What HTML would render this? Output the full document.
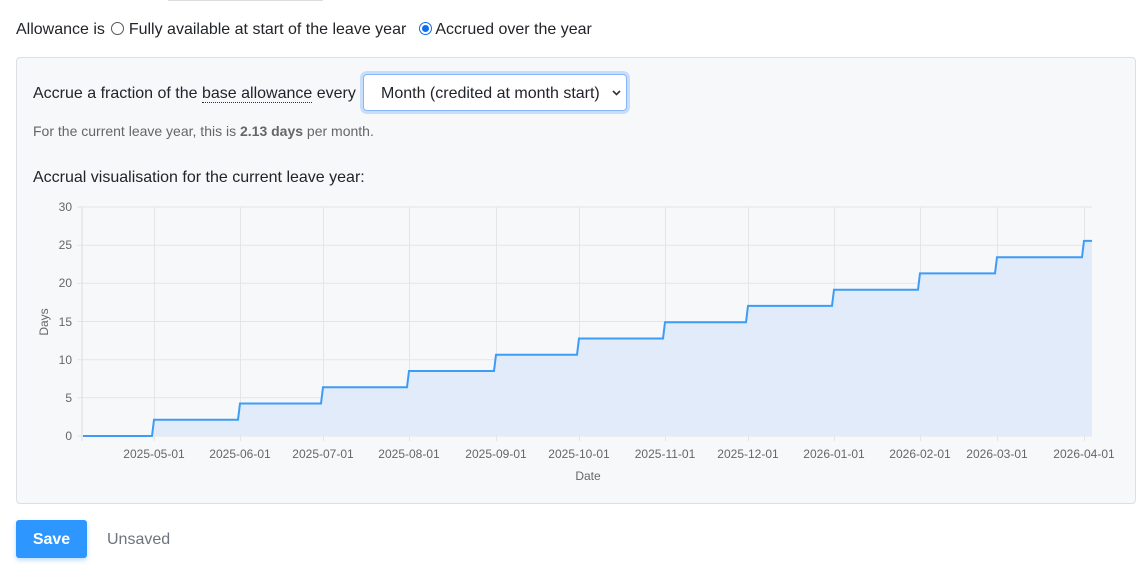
<!DOCTYPE html>
<html><head><style>
body{margin:0;width:1148px;height:569px;background:#fff;font-family:"Liberation Sans",sans-serif;position:relative;overflow:hidden;color:#212529}
.a{position:absolute;white-space:nowrap}
</style></head><body>
<div class="a" style="left:168px;top:-1px;width:155px;height:2px;background:#ddd"></div>
<div class="a" style="left:16px;top:21px;font-size:16px;">Allowance is
<span style="display:inline-block;width:11px;height:11px;border:1px solid #555;border-radius:50%;vertical-align:-1px;margin-left:2px"></span> Fully available at start of the leave year
<span style="display:inline-block;width:11px;height:11px;border:1px solid #0b6ef5;border-radius:50%;vertical-align:-1px;margin-left:8px;position:relative"><span style="position:absolute;left:2px;top:2px;width:7px;height:7px;border-radius:50%;background:#0b6ef5"></span></span> Accrued over the year</div>
<div class="a" style="left:16px;top:57px;width:1118px;height:445px;background:#f7f8fa;border:1px solid #dcdfe3;border-radius:4px"></div>
<div class="a" style="left:33px;top:85px;font-size:16px">Accrue a fraction of the <span style="border-bottom:1px dotted #333">base allowance</span> every</div>
<div class="a" style="left:363px;top:74px;width:264px;height:37px;background:#fff;border:1px solid #86b7fe;border-radius:4px;box-shadow:0 0 0 3px rgba(13,110,253,.2);box-sizing:border-box;font-size:16px;padding:10px 0 0 17px">Month (credited at month start)<svg style="position:absolute;right:5px;top:15px" width="9" height="6"><path d="M1 1 L4.5 4.5 L8 1" fill="none" stroke="#333" stroke-width="1.6"/></svg></div>
<div class="a" style="left:33px;top:123px;font-size:14px;color:#666">For the current leave year, this is <b>2.13 days</b> per month.</div>
<div class="a" style="left:33px;top:169px;font-size:16px">Accrual visualisation for the current leave year:</div>
<svg class="a" style="left:0;top:0" width="1148" height="569" font-family="Liberation Sans" font-size="12" fill="#666">
<g stroke="#e5e5e5" stroke-width="1">
<line x1="77" y1="207" x2="1092" y2="207"/><line x1="77" y1="245.2" x2="1092" y2="245.2"/><line x1="77" y1="283.3" x2="1092" y2="283.3"/><line x1="77" y1="321.5" x2="1092" y2="321.5"/><line x1="77" y1="359.7" x2="1092" y2="359.7"/><line x1="77" y1="397.8" x2="1092" y2="397.8"/><line x1="77" y1="436" x2="1092" y2="436"/>
<line x1="82" y1="207" x2="82" y2="441" stroke="#ddd"/>
<line x1="154.5" y1="207" x2="154.5" y2="441"/><line x1="240.5" y1="207" x2="240.5" y2="441"/><line x1="323.5" y1="207" x2="323.5" y2="441"/><line x1="409.5" y1="207" x2="409.5" y2="441"/><line x1="496.5" y1="207" x2="496.5" y2="441"/><line x1="579.5" y1="207" x2="579.5" y2="441"/><line x1="665.5" y1="207" x2="665.5" y2="441"/><line x1="748.5" y1="207" x2="748.5" y2="441"/><line x1="834.5" y1="207" x2="834.5" y2="441"/><line x1="920.5" y1="207" x2="920.5" y2="441"/><line x1="997.5" y1="207" x2="997.5" y2="441"/><line x1="1084.5" y1="207" x2="1084.5" y2="441"/>
</g>
<path d="M83 436 H152 L154 419.7 H238 L240 403.5 H321 L323 387.2 H407 L409 371 H494 L496 354.7 H577 L579 338.5 H663 L665 322.2 H746 L748 305.9 H832 L834 289.7 H918 L920 273.4 H995 L997 257.2 H1082 L1084 240.9 H1092 V436 Z" fill="#e1ebf9"/>
<path d="M83 436 H152 L154 419.7 H238 L240 403.5 H321 L323 387.2 H407 L409 371 H494 L496 354.7 H577 L579 338.5 H663 L665 322.2 H746 L748 305.9 H832 L834 289.7 H918 L920 273.4 H995 L997 257.2 H1082 L1084 240.9 H1092" fill="none" stroke="#3d9cf5" stroke-width="2"/>
<g text-anchor="end"><text x="72" y="211">30</text><text x="72" y="249">25</text><text x="72" y="287">20</text><text x="72" y="326">15</text><text x="72" y="364">10</text><text x="72" y="402">5</text><text x="72" y="440">0</text></g>
<g text-anchor="middle"><text x="154" y="458">2025-05-01</text><text x="240" y="458">2025-06-01</text><text x="323" y="458">2025-07-01</text><text x="409" y="458">2025-08-01</text><text x="496" y="458">2025-09-01</text><text x="579" y="458">2025-10-01</text><text x="665" y="458">2025-11-01</text><text x="748" y="458">2025-12-01</text><text x="834" y="458">2026-01-01</text><text x="920" y="458">2026-02-01</text><text x="997" y="458">2026-03-01</text><text x="1084" y="458">2026-04-01</text>
<text x="588" y="480">Date</text>
<text transform="translate(48 322) rotate(-90)">Days</text></g>
</svg>
<div class="a" style="left:16px;top:520px;width:71px;height:38px;background:#2e96ff;border-radius:3px;color:#fff;font-weight:bold;font-size:16px;text-align:center;line-height:39px;box-shadow:0 2px 5px rgba(46,150,255,.35)">Save</div>
<div class="a" style="left:107px;top:531px;font-size:16px;color:#6c757d">Unsaved</div>
</body></html>
